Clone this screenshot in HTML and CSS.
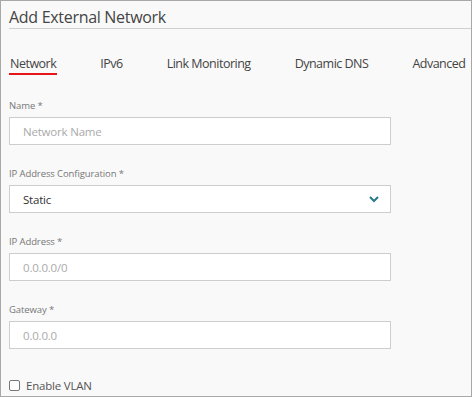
FILE: index.html
```html
<!DOCTYPE html>
<html lang="en">
<head>
    <meta charset="UTF-8">
    <meta name="viewport" content="width=device-width, initial-scale=1.0">
    <title>Add External Network</title>
    <link rel="stylesheet" href="styles.css">
</head>
<body>
    <div class="dialog">
        <h1 class="title">Add External Network</h1>

        <nav class="tabs">
            <span class="tab active">Network</span>
            <span class="tab">IPv6</span>
            <span class="tab">Link Monitoring</span>
            <span class="tab">Dynamic DNS</span>
            <span class="tab">Advanced</span>
        </nav>

        <form class="net-form">
            <div class="form-group">
                <label for="name">Name *</label>
                <input type="text" id="name" placeholder="Network Name">
            </div>

            <div class="form-group">
                <label for="ipConfig">IP Address Configuration *</label>
                <div class="select">
                    <span>Static</span>
                    <svg width="10" height="7" viewBox="0 0 10 7"><polyline points="1,1 5,5 9,1" fill="none" stroke="#2b7a8b" stroke-width="2"/></svg>
                </div>
            </div>

            <div class="form-group">
                <label for="ip">IP Address *</label>
                <input type="text" id="ip" placeholder="0.0.0.0/0">
            </div>

            <div class="form-group">
                <label for="gateway">Gateway *</label>
                <input type="text" id="gateway" placeholder="0.0.0.0">
            </div>

            <label class="check"><span class="box"></span>Enable VLAN</label>
        </form>
    </div>
</body>
</html>
```

FILE: styles.css
```css
body { margin: 0; font-family: "Open Sans", Arial, sans-serif; }
.dialog { box-sizing: border-box; width: 472px; height: 397px; border: 1px solid #a8a8a8; background: #f9f9f9; overflow: hidden; }
.title { margin: 0 0 0 8px; padding-top: 6px; font-size: 16px; letter-spacing: -0.3px; line-height: 21px; font-weight: normal; color: #444; border-bottom: 1px solid #cfcfcf; }
.tabs { display: flex; gap: 42px; margin: 26px 0 0 8px; white-space: nowrap; }
.tab { font-size: 12.5px; letter-spacing: -0.5px; line-height: 18px; color: #444; padding: 0 1px; border-bottom: 2px solid transparent; }
.tab.active { border-bottom-color: #e8141b; }
.net-form { padding: 25px 0 0 8px; }
.form-group { margin-bottom: 23px; }
.form-group label { display: block; font-size: 9.5px; letter-spacing: -0.1px; line-height: 12px; color: #777; margin-bottom: 5px; }
input, .select { box-sizing: border-box; width: 382px; height: 28px; border: 1px solid #cdcdcd; background: #fff; padding: 0 13px; font-family: inherit; font-size: 11.5px; letter-spacing: -0.2px; color: #333; }
input::placeholder { color: #aaa; }
.select { display: flex; align-items: center; justify-content: space-between; padding-right: 11px; }
.check { display: flex; align-items: center; gap: 6px; margin-top: 29px; font-size: 11.5px; letter-spacing: -0.2px; color: #555; }
.box { width: 9px; height: 9px; border: 1px solid #777; border-radius: 2px; background: #fff; }
```
